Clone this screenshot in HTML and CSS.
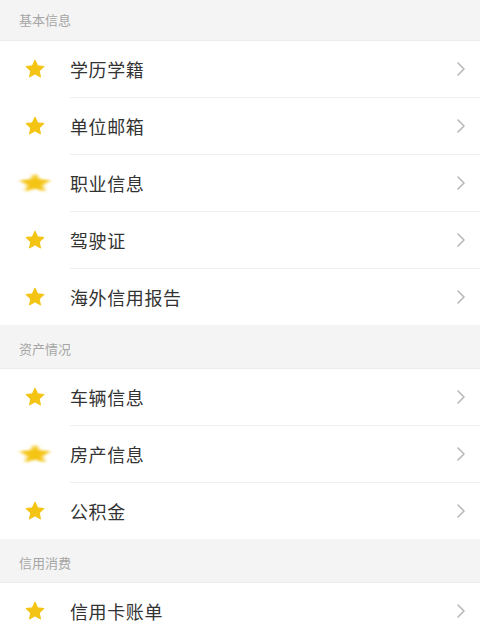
FILE: index.html
```html
<!DOCTYPE html>
<html lang="zh-CN">
<head>
    <meta charset="UTF-8">
    <meta name="viewport" content="width=device-width, initial-scale=1.0">
    <title>资料信息</title>
    <link rel="stylesheet" href="styles.css">
</head>
<body>
    <svg width="0" height="0" class="defs">
        <defs>
            <symbol id="star" viewBox="0 0 24 24">
                <path d="M12 2.5l2.9 6.1 6.6.8-4.9 4.6 1.3 6.6L12 17.3l-5.9 3.3 1.3-6.6-4.9-4.6 6.6-.8z" fill="#f4c414" stroke="#f4c414" stroke-width="1.2" stroke-linejoin="round"/>
            </symbol>
            <symbol id="arrow" viewBox="0 0 10 16">
                <path d="M2 2l6 6-6 6" fill="none" stroke="#b8b8b8" stroke-width="1.6" stroke-linecap="round" stroke-linejoin="round"/>
            </symbol>
        </defs>
    </svg>

    <div class="group-title first">基本信息</div>
    <div class="list">
        <div class="item"><span class="icon"><svg><use href="#star"/></svg></span><span class="label">学历学籍</span><svg class="arrow"><use href="#arrow"/></svg></div>
        <div class="item"><span class="icon"><svg><use href="#star"/></svg></span><span class="label">单位邮箱</span><svg class="arrow"><use href="#arrow"/></svg></div>
        <div class="item"><span class="icon wide"><svg><use href="#star"/></svg></span><span class="label">职业信息</span><svg class="arrow"><use href="#arrow"/></svg></div>
        <div class="item"><span class="icon"><svg><use href="#star"/></svg></span><span class="label">驾驶证</span><svg class="arrow"><use href="#arrow"/></svg></div>
        <div class="item"><span class="icon"><svg><use href="#star"/></svg></span><span class="label">海外信用报告</span><svg class="arrow"><use href="#arrow"/></svg></div>
    </div>

    <div class="group-title">资产情况</div>
    <div class="list">
        <div class="item"><span class="icon"><svg><use href="#star"/></svg></span><span class="label">车辆信息</span><svg class="arrow"><use href="#arrow"/></svg></div>
        <div class="item"><span class="icon wide"><svg><use href="#star"/></svg></span><span class="label">房产信息</span><svg class="arrow"><use href="#arrow"/></svg></div>
        <div class="item"><span class="icon"><svg><use href="#star"/></svg></span><span class="label">公积金</span><svg class="arrow"><use href="#arrow"/></svg></div>
    </div>

    <div class="group-title">信用消费</div>
    <div class="list">
        <div class="item"><span class="icon"><svg><use href="#star"/></svg></span><span class="label">信用卡账单</span><svg class="arrow"><use href="#arrow"/></svg></div>
    </div>
</body>
</html>
```

FILE: styles.css
```css
body {
    margin: 0;
    background-color: #f4f4f4;
    font-family: "Noto Sans CJK SC", "Noto Sans", sans-serif;
    overflow: hidden;
}
.defs {
    position: absolute;
}
.group-title {
    height: 43px;
    box-sizing: border-box;
    padding: 14px 0 0 19px;
    font-size: 13px;
    line-height: 20px;
    color: #a6a6a6;
    background: #f4f4f4;
}
.group-title.first {
    height: 40px;
    padding-top: 10px;
}
.list {
    background: #fff;
    border-top: 1px solid #ececec;
}
.item {
    display: flex;
    align-items: center;
    height: 57px;
    position: relative;
}
.item:first-child {
    height: 56px;
}
.item + .item::before {
    content: "";
    position: absolute;
    top: 0;
    left: 70px;
    right: 0;
    border-top: 1px solid #efefef;
}
.icon {
    width: 70px;
    display: flex;
    justify-content: center;
}
.icon svg {
    width: 22px;
    height: 22px;
    filter: blur(0.7px);
}
.icon.wide svg {
    transform: scaleX(1.6);
    filter: blur(1.2px);
}
.label {
    flex: 1;
    font-size: 18px;
    color: #333;
    letter-spacing: 0.6px;
}
.arrow {
    width: 10px;
    height: 16px;
    margin-right: 14px;
}
```
